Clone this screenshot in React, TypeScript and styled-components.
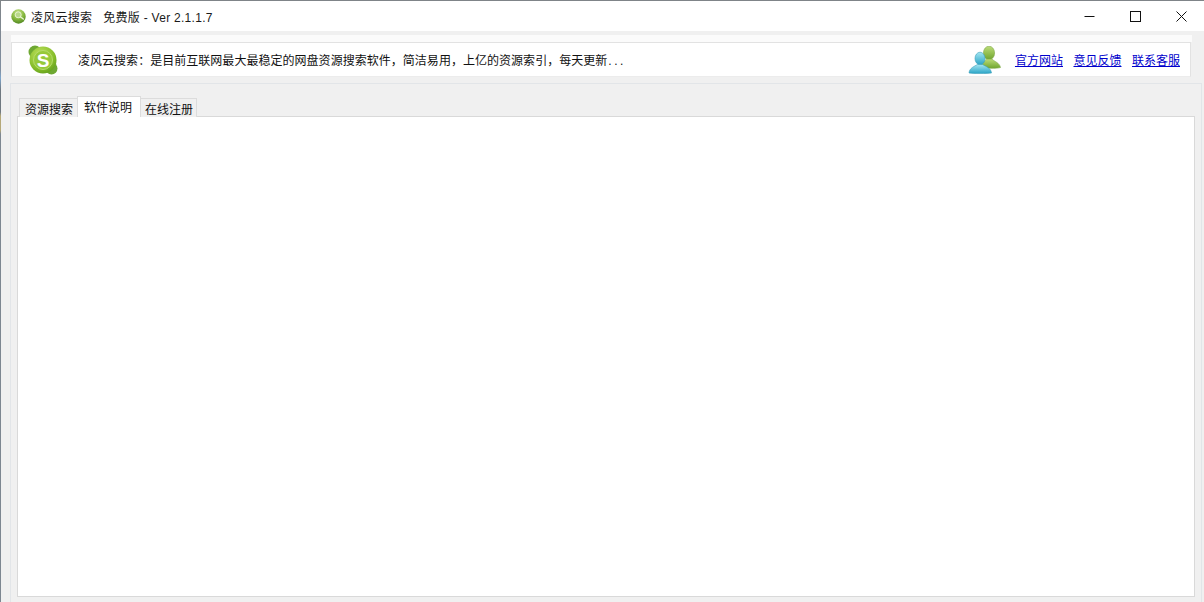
import React from "react";
import styled, { createGlobalStyle } from "styled-components";

const GlobalStyle = createGlobalStyle`
  html, body {
    margin: 0;
    padding: 0;
    background: #f0f0f0;
  }
  body {
    font-family: "Liberation Sans", "Noto Sans CJK SC", sans-serif;
  }
`;

const Window = styled.div`
  width: 1204px;
  height: 602px;
  overflow: hidden;
  display: flex;
  background: #f0f0f0;
`;

const LeftEdge = styled.div`
  width: 1px;
  flex: none;
  background: linear-gradient(
    to bottom,
    #7f8488 0,
    #7f8ea0 70px,
    #7fa6cc 78px,
    #6f7880 90px,
    #6f7880 112px,
    #b5a878 116px,
    #b5a878 130px,
    #7d8791 134px,
    #7d8791 100%
  );
`;

const Main = styled.div`
  flex: 1;
  display: flex;
  flex-direction: column;
  border-top: 1px solid #7f8488;
  min-width: 0;
`;

const TitleBar = styled.div`
  height: 30px;
  flex: none;
  display: flex;
  align-items: center;
  background: #fff;
  padding-left: 10px;
`;

const TitleText = styled.span`
  margin-left: 5px;
  font-size: 12px;
  color: #1a1a1a;
  white-space: pre;
  letter-spacing: 0.28px;
`;

const WindowButtons = styled.div`
  margin-left: auto;
  display: flex;
  height: 100%;
`;

const WindowButton = styled.div`
  width: 46px;
  height: 100%;
  display: flex;
  align-items: center;
  justify-content: center;
`;

const Body = styled.div`
  flex: 1;
  display: flex;
  flex-direction: column;
  padding: 4px 0 0 10px;
`;

const WhiteStrip = styled.div`
  width: 1181px;
  height: 7px;
  background: #fbfbfb;
`;

const Banner = styled.div`
  width: 1180px;
  height: 35px;
  box-sizing: border-box;
  display: flex;
  align-items: center;
  background: #fff;
  border: 1px solid #e2e2e2;
  border-bottom-color: #ececec;
  padding-left: 16px;
  padding-right: 10px;
`;

const BannerText = styled.span`
  margin-left: 20px;
  font-size: 12px;
  color: #111;
  white-space: nowrap;
  letter-spacing: 0.03px;
`;

const Ellipsis = styled.span`
  letter-spacing: 2.5px;
  margin-left: 1px;
`;

const BannerLinks = styled.div`
  margin-left: auto;
  display: flex;
  align-items: center;
  gap: 10.5px;
`;

const LinkItem = styled.a`
  font-size: 12px;
  color: #0000cc;
  text-decoration: underline;
  line-height: 14px;
  margin-top: 2px;
`;

const UsersWrap = styled.div`
  display: flex;
  margin-right: 2px;
`;

const TabPanel = styled.div`
  margin: 6px 0 0 -1px;
  width: 1192px;
  height: 520px;
  box-sizing: border-box;
  border: 1px solid #e2e5e8;
  border-bottom: none;
  padding: 13px 0 0 6px;
  display: flex;
  flex-direction: column;
`;

const TabRow = styled.div`
  display: flex;
  align-items: flex-end;
  height: 20px;
  flex: none;
  padding-left: 2px;
`;

const Tab = styled.div<{ $active?: boolean; $pad: string }>`
  box-sizing: border-box;
  height: ${(p) => (p.$active ? "21px" : "19px")};
  padding: ${(p) => p.$pad};
  display: flex;
  align-items: center;
  font-size: 12px;
  color: #111;
  background: ${(p) => (p.$active ? "#fff" : "#f0f0f0")};
  border-top: 1px solid #dcdcdc;
  border-left: 1px solid #dcdcdc;
  border-right: 1px solid #dcdcdc;
  position: relative;
  z-index: ${(p) => (p.$active ? 1 : 0)};
  &:first-child {
    border-right: none;
  }
  &:last-child {
    border-left: none;
  }
`;

const TabContent = styled.div`
  width: 1178px;
  height: 481px;
  box-sizing: border-box;
  background: #fff;
  border: 1px solid #d9d9d9;
  margin-top: -1px;
`;

const TitleIcon = () => (
  <svg width="15" height="15" viewBox="0 0 15 15">
    <defs>
      <radialGradient id="ti" cx="45%" cy="25%" r="80%">
        <stop offset="0%" stopColor="#c8e48a" />
        <stop offset="55%" stopColor="#86b83e" />
        <stop offset="100%" stopColor="#4b8120" />
      </radialGradient>
    </defs>
    <circle cx="7.5" cy="7.5" r="7.2" fill="url(#ti)" />
    <circle cx="7.2" cy="5.8" r="3" fill="#b9d98a" stroke="#e6f3cf" strokeWidth="1" />
    <path d="M9.6 8 L12.3 10" stroke="#e8f4d2" strokeWidth="1.4" strokeLinecap="round" />
  </svg>
);

const BrandLogo = () => (
  <svg width="30" height="30" viewBox="0 0 30 30">
    <defs>
      <radialGradient id="bl" cx="40%" cy="30%" r="80%">
        <stop offset="0%" stopColor="#bfe35e" />
        <stop offset="65%" stopColor="#86bd2a" />
        <stop offset="100%" stopColor="#5a9a18" />
      </radialGradient>
    </defs>
    <circle cx="7" cy="7" r="6.5" fill="#6ea832" />
    <circle cx="23.5" cy="23.5" r="6" fill="#6ea832" />
    <circle cx="15" cy="15" r="13.5" fill="url(#bl)" />
    <circle cx="15" cy="15" r="9.5" fill="#97c93a" stroke="#b6dc6a" strokeWidth="1" />
    <text x="15" y="21.5" textAnchor="middle" fontFamily="Liberation Sans, sans-serif" fontSize="19" fontWeight="700" fill="#fff">S</text>
  </svg>
);

const UsersIcon = () => (
  <svg width="34" height="28" viewBox="0 0 34 28">
    <defs>
      <linearGradient id="gu" x1="0" y1="0" x2="0" y2="1">
        <stop offset="0%" stopColor="#bcdc78" />
        <stop offset="100%" stopColor="#6fa52e" />
      </linearGradient>
      <linearGradient id="bu" x1="0" y1="0" x2="0" y2="1">
        <stop offset="0%" stopColor="#a4e6f2" />
        <stop offset="100%" stopColor="#2aa4c6" />
      </linearGradient>
    </defs>
    <ellipse cx="21" cy="7" rx="5.6" ry="6.8" fill="url(#gu)" stroke="#7da748" strokeWidth="0.6" />
    <path d="M12 21 C13 16.5 16.5 15.5 18.5 13 L24 13 C26 15.5 31.5 16.5 32.5 21.5 C29 22.8 16 22.5 12 21 Z" fill="url(#gu)" stroke="#7da748" strokeWidth="0.6" />
    <ellipse cx="12" cy="12.5" rx="5" ry="6.3" fill="url(#bu)" stroke="#3a9fbb" strokeWidth="0.6" />
    <path d="M1 27 C1.5 22 6 20.5 9.5 18.5 L14.5 18.5 C18 20.5 23 22 23.5 27 C18 27.8 6 27.8 1 27 Z" fill="url(#bu)" stroke="#3a9fbb" strokeWidth="0.6" />
  </svg>
);

export default function App() {
  return (
    <Window>
      <GlobalStyle />
      <LeftEdge />
      <Main>
        <TitleBar>
          <TitleIcon />
          <TitleText>凌风云搜索   免费版 - Ver 2.1.1.7</TitleText>
          <WindowButtons>
            <WindowButton>
              <svg width="11" height="11" viewBox="0 0 11 11">
                <path d="M0.5 5.5H10.5" stroke="#111" strokeWidth="1" />
              </svg>
            </WindowButton>
            <WindowButton>
              <svg width="11" height="11" viewBox="0 0 11 11">
                <rect x="0.5" y="0.5" width="10" height="10" fill="none" stroke="#111" strokeWidth="1" />
              </svg>
            </WindowButton>
            <WindowButton>
              <svg width="11" height="11" viewBox="0 0 11 11">
                <path d="M0.5 0.5L10.5 10.5M10.5 0.5L0.5 10.5" stroke="#111" strokeWidth="1" />
              </svg>
            </WindowButton>
          </WindowButtons>
        </TitleBar>
        <Body>
          <WhiteStrip />
          <Banner>
            <BrandLogo />
            <BannerText>
              凌风云搜索：是目前互联网最大最稳定的网盘资源搜索软件，简洁易用，上亿的资源索引，每天更新
              <Ellipsis>...</Ellipsis>
            </BannerText>
            <BannerLinks>
              <UsersWrap>
                <UsersIcon />
              </UsersWrap>
              <LinkItem>官方网站</LinkItem>
              <LinkItem>意见反馈</LinkItem>
              <LinkItem>联系客服</LinkItem>
            </BannerLinks>
          </Banner>
          <TabPanel>
            <TabRow>
              <Tab $pad="0 4px 0 5px">资源搜索</Tab>
              <Tab $active $pad="0 8px 2px 6px">软件说明</Tab>
              <Tab $pad="0 3px 0 4px">在线注册</Tab>
            </TabRow>
            <TabContent />
          </TabPanel>
        </Body>
      </Main>
    </Window>
  );
}
